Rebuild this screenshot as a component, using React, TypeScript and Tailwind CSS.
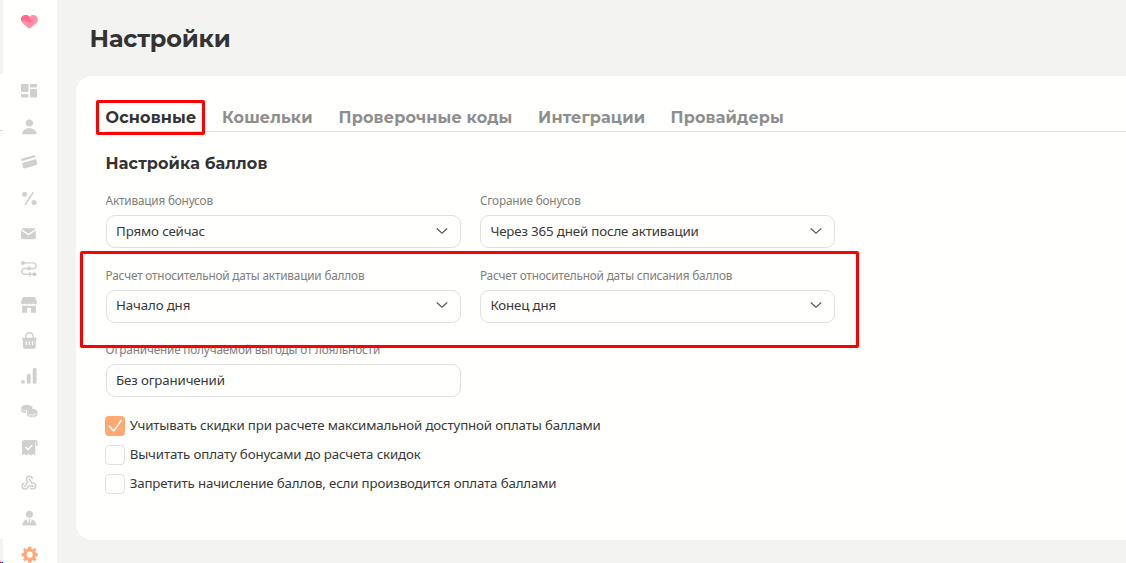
import type { ReactNode } from 'react';
import { MdWebhook } from 'react-icons/md';

function Icon({ children }: { children: ReactNode }) {
  return (
    <svg viewBox="0 0 16 16" className="w-4 h-4 overflow-visible" fill="currentColor">
      {children}
    </svg>
  );
}

const menu = [
  {
    id: 'dashboard',
    icon: (
      <Icon>
        <rect x="0" y="1" width="7.5" height="8" rx="0.8" />
        <rect x="0" y="11" width="7.5" height="3.6" rx="0.8" />
        <rect x="9" y="1" width="7" height="3.5" rx="0.8" />
        <rect x="9" y="6" width="7" height="8.6" rx="0.8" />
      </Icon>
    ),
  },
  {
    id: 'clients',
    icon: (
      <Icon>
        <circle cx="8.4" cy="4" r="3.6" />
        <path d="M1.2 15.3c0-3.6 3-6 7.2-6s7.2 2.4 7.2 6z" />
      </Icon>
    ),
  },
  {
    id: 'cards',
    icon: (
      <Icon>
        <path d="M0 6c0-.8.4-1.3 1.2-1.5l11-3.1c1-.3 1.7.1 2 1l.2.9L.3 7.3z" />
        <path d="M1.2 9l13.9-3.9 1.1 4.2c.2.9-.2 1.5-1 1.7l-11.5 3.4c-.9.3-1.5-.1-1.7-.9z" />
      </Icon>
    ),
  },
  {
    id: 'discounts',
    icon: (
      <Icon>
        <circle cx="3.6" cy="4.2" r="2.5" />
        <circle cx="13" cy="12.6" r="2.5" />
        <path d="M4.4 14.3L12 2.7" stroke="currentColor" strokeWidth="1.6" strokeLinecap="round" />
      </Icon>
    ),
  },
  {
    id: 'mailing',
    icon: (
      <Icon>
        <path d="M.4 2.9C.8 2.4 1.2 2.2 2 2.2h11c.7 0 1.2.2 1.5.7L7.5 7.7z" />
        <path d="M0 4.5l6.9 4.6c.4.3.8.3 1.2 0l6.8-4.6v6.7c0 1.3-.8 2-2 2H2c-1.2 0-2-.7-2-2z" />
      </Icon>
    ),
  },
  {
    id: 'scenarios',
    icon: (
      <Icon>
        <circle cx="2" cy="1.9" r="2" />
        <circle cx="8" cy="7.5" r="2" />
        <circle cx="13.5" cy="13.2" r="2" />
        <path
          d="M2 1.9h10.2a2.8 2.8 0 0 1 0 5.6H3.7a2.85 2.85 0 0 0 0 5.7h9.5M8.9 10.9v4.6"
          fill="none"
          stroke="currentColor"
          strokeWidth="1.4"
        />
      </Icon>
    ),
  },
  {
    id: 'shops',
    icon: (
      <Icon>
        <path d="M2 0h12l1.9 5c.3 1.5-.6 2.4-1.9 2.4-1 0-1.6-.4-2-1.1-.4.7-1 1.1-2 1.1s-1.6-.4-2-1.1c-.4.7-1 1.1-2 1.1s-1.6-.4-2-1.1c-.4.7-1 1.1-2 1.1C.7 7.4-.2 6.5.1 5z" />
        <path d="M1.2 8.7h13.7v7.1h-4.8v-5H6v5H1.2z" />
      </Icon>
    ),
  },
  {
    id: 'orders',
    icon: (
      <Icon>
        <path d="M4.8 5V3.4a3.7 3.7 0 0 1 7.4 0V5" fill="none" stroke="currentColor" strokeWidth="1.5" />
        <path
          fillRule="evenodd"
          d="M1.1 4.7h14.6v1.7l-.9.6v7c0 1.1-.7 1.8-1.8 1.8H3.8c-1.1 0-1.8-.7-1.8-1.8V7l-.9-.6zM4.6 8.3v3.7h1.3V8.3zM7.700 8.300v3.700H9V8.300zM10.900 8.300v3.700h1.300V8.300z"
        />
      </Icon>
    ),
  },
  {
    id: 'analytics',
    icon: (
      <Icon>
        <circle cx="2" cy="13.8" r="1.9" />
        <rect x="5.8" y="5.8" width="3.9" height="10" rx="1.9" />
        <rect x="11.7" y="-0.2" width="3.9" height="16" rx="1.9" />
      </Icon>
    ),
  },
  {
    id: 'points',
    icon: (
      <Icon>
        <ellipse cx="5.8" cy="3.7" rx="5.8" ry="2.9" />
        <path d="M0 4.8v1.4C0 8 2.3 9 5 9c-.4-2 1-3.4 3-4.1H0z" />
        <ellipse cx="11.2" cy="7.7" rx="5.3" ry="2.9" />
        <path d="M5.9 8.2v2.2c0 1.7 2.3 2.9 5.3 2.9s5.3-1.2 5.3-2.9V8.2z" />
        <path
          d="M.6 5.5c1.2.9 3 1.2 5.2 1M6.500 9.500c2 1.800 7.400 1.800 9.400 0M8.700 10.700v2M11.200 11v2M13.700 10.700v2"
          stroke="#fffffd"
          strokeWidth="0.6"
          fill="none"
        />
      </Icon>
    ),
  },
  {
    id: 'receipts',
    icon: (
      <Icon>
        <path d="M3.4 0H14.2c1.5 0 2.4.9 2.4 2.4V6h-1.5V2.3c0-.5-.8-.5-.8 0v13.2l-2.2-1.4-2.2 1.4-2.2-1.4-2.2 1.4L3.2 14.1 1 15.5V2.4C1 .9 1.9 0 3.4 0z" />
        <path d="M4.6 7.3l2.4 2.5 4.3-4.9" stroke="#fffffd" strokeWidth="1.4" fill="none" />
      </Icon>
    ),
  },
  { id: 'webhooks', icon: <MdWebhook className="w-[18px] h-[18px] -ml-[0.7px]" /> },
  {
    id: 'staff',
    icon: (
      <Icon>
        <circle cx="8.4" cy="3.3" r="3.5" />
        <path d="M1.2 14.6c0-3.1 1.9-5.4 4.7-6.1l1.8 6.1zM15.6 14.6c0-3.1-1.9-5.4-4.7-6.1l-1.8 6.1zM7.4 8.3h2L9 9.9l.7 3.3-1.3 1.3-1.3-1.3.7-3.3z" />
      </Icon>
    ),
  },
  {
    id: 'settings',
    active: true,
    icon: (
      <Icon>
        <g transform="translate(8.7 7.7)">
          <path
            fillRule="evenodd"
            d="M-1.5-8h3L2-5.8l1.2.5L5-6.6 6.7-5 5.4-3.1l.5 1.2L8-1.5v3l-2.1.4-.5 1.2L6.7 5 5 6.6 3.2 5.3 2 5.8 1.5 8h-3L-2 5.8l-1.2-.5L-5 6.6-6.7 5l1.3-1.9-.5-1.2L-8 1.5v-3l2.1-.4.5-1.2L-6.7-5-5-6.6l1.8 1.3L-2-5.8zM0-3.1a3.1 3.1 0 1 0 0 6.2 3.1 3.1 0 0 0 0-6.2z"
          />
        </g>
      </Icon>
    ),
  },
];

const tabs = [
  { label: 'Основные', className: 'w-[90px] text-[#333]' },
  { label: 'Кошельки', className: 'w-[90px] text-[#8e8e8e]' },
  { label: 'Проверочные коды', className: 'w-[173px] text-[#8e8e8e]' },
  { label: 'Интеграции', className: 'w-[106px] text-[#8e8e8e]' },
  { label: 'Провайдеры', className: 'w-[113px] text-[#8e8e8e]' },
];

const fields = [
  { label: 'Активация бонусов', value: 'Прямо сейчас', select: true },
  { label: 'Сгорание бонусов', value: 'Через 365 дней после активации', select: true },
  { label: 'Расчет относительной даты активации баллов', value: 'Начало дня', select: true },
  { label: 'Расчет относительной даты списания баллов', value: 'Конец дня', select: true },
  { label: 'Ограничение получаемой выгоды от лояльности', value: 'Без ограничений', select: false },
];

const options = [
  { label: 'Учитывать скидки при расчете максимальной доступной оплаты баллами', checked: true },
  { label: 'Вычитать оплату бонусами до расчета скидок', checked: false },
  { label: 'Запретить начисление баллов, если производится оплата баллами', checked: false },
];

function Sidebar() {
  return (
    <div className="flex shrink-0 w-[57px]">
      {/* Page edge */}
      <div className="w-[3px] flex flex-col">
        <div className="h-[74px] bg-[#f3f3f2]" />
        <div className="h-[56px]" />
        <div className="h-px bg-[#d8d8d8]" />
        <div className="h-[408px]" />
        <div className="h-[23px] bg-[#f3f3f2]" />
        <div className="h-px flex">
          <div className="w-px bg-[#f00]" />
          <div className="w-px bg-[#0c0]" />
          <div className="w-px bg-[#00f]" />
        </div>
      </div>
      <div className="w-[54px] pl-[18px]">
        <svg viewBox="0 0 17 14" className="w-[17px] h-[14px] mt-[14.5px] mb-[44.5px]">
          <path d="M8.5 2C10-.3 13.4-.6 15.4 1.3c2 1.9 1.9 4.8 0 6.7L10 12.8c-.9.9-2.1.9-3 0L1.5 8C-.4 6.1-.5 3.2 1.5 1.3 3.5-.6 7-.3 8.5 2z" fill="#ff8fab" />
          <path d="M8.5 2C7-.3 3.5-.6 1.5 1.3c-1.5 1.4-1.9 3.6-.9 5.3.8-1.5 2.6-1.6 4-.5l1.6 1c1.4.8 3.2.6 4.4-.7z" fill="#fb6a8f" />
        </svg>
        {menu.map((item) => (
          <div
            key={item.id}
            className={item.active ? 'h-[35.7px] flex items-center text-[#ffa872]' : 'h-[35.7px] flex items-center text-[#d0d0d0]'}
          >
            {item.icon}
          </div>
        ))}
      </div>
    </div>
  );
}

function Field({ label, value, select }: { label: string; value: string; select: boolean }) {
  return (
    <div className="h-[74.5px]">
      <div className="h-[14px] text-[11.8px] leading-[12.6px] tracking-[-0.19px] text-[#80807c] whitespace-nowrap">{label}</div>
      <div className="mt-[7px] h-[33px] flex items-center justify-between pl-[9.5px] pr-3 border border-[#e0e0e0] rounded-[9px] text-[13.3px] tracking-[-0.15px] text-[#383838]">
        <span>{value}</span>
        {select && (
          <svg viewBox="0 0 12 6" className="w-3 h-1.5 -mt-0.5" fill="none" stroke="#555" strokeWidth="1.1">
            <path d="M.8.5L6 5.200 11.200.5" />
          </svg>
        )}
      </div>
    </div>
  );
}

export default function App() {
  return (
    <div className="relative w-[1126px] h-[563px] flex overflow-hidden bg-[#fffffd] font-['Noto_Sans',sans-serif]">
      <Sidebar />

      <main className="grow flex flex-col pl-[19px] bg-[#f3f3f2]">
        <h1 className="h-[76px] pl-[13.5px] pt-[23px] text-[24px] leading-8 font-bold text-[#333] tracking-[-0.2px] font-['Montserrat','Inter',sans-serif]">
          Настройки
        </h1>

        <div className="h-[464px] rounded-l-[16px] bg-[#fffffd] pl-[29.6px] pt-[31px]">
          {/* Tabs */}
          <div className="h-[25px] pt-px flex gap-[26.5px] border-b border-[#dfdfdf] text-[16px] leading-5 tracking-[0.15px] font-bold font-['Montserrat','Inter',sans-serif]">
            {tabs.map((tab) => (
              <div key={tab.label} className={`${tab.className} whitespace-nowrap`}>
                {tab.label}
              </div>
            ))}
          </div>

          <h2 className="mt-[22px] h-5 text-[16px] leading-5 tracking-[0.12px] font-bold text-[#333] font-['Montserrat','Inter',sans-serif]">
            Настройка баллов
          </h2>

          <div className="mt-5 grid grid-cols-[355px_355px] gap-x-[19.3px]">
            {fields.map((field) => (
              <Field key={field.label} {...field} />
            ))}
          </div>

          {/* Checkboxes */}
          <div className="-mt-[1.6px] -ml-[0.3px] flex flex-col gap-[9.2px]">
            {options.map((option) => (
              <div key={option.label} className="flex items-center gap-[4.4px] h-5 text-[13.3px] tracking-[-0.15px] text-[#383838] whitespace-nowrap">
                <div
                  className={
                    option.checked
                      ? 'w-5 h-5 rounded-[4px] bg-[#ffa872] flex items-center justify-center'
                      : 'w-5 h-5 rounded-[4px] border border-[#e0e0e0]'
                  }
                >
                  {option.checked && (
                    <svg viewBox="0 0 14 14" className="w-3.5 h-3.5" fill="none" stroke="#fff" strokeWidth="1.5">
                      <path d="M.8 6.8L5.8 12 13.5 1" />
                    </svg>
                  )}
                </div>
                <span>{option.label}</span>
              </div>
            ))}
          </div>
        </div>
      </main>

      {/* Highlight frames */}
      <div className="absolute left-[96px] top-[100px] w-[109px] h-[35px] border-3 border-[#f00] rounded-[2px]" />
      <div className="absolute left-[80px] top-[251px] w-[779px] h-[97px] border-3 border-[#f00] rounded-[2px]" />
    </div>
  );
}
